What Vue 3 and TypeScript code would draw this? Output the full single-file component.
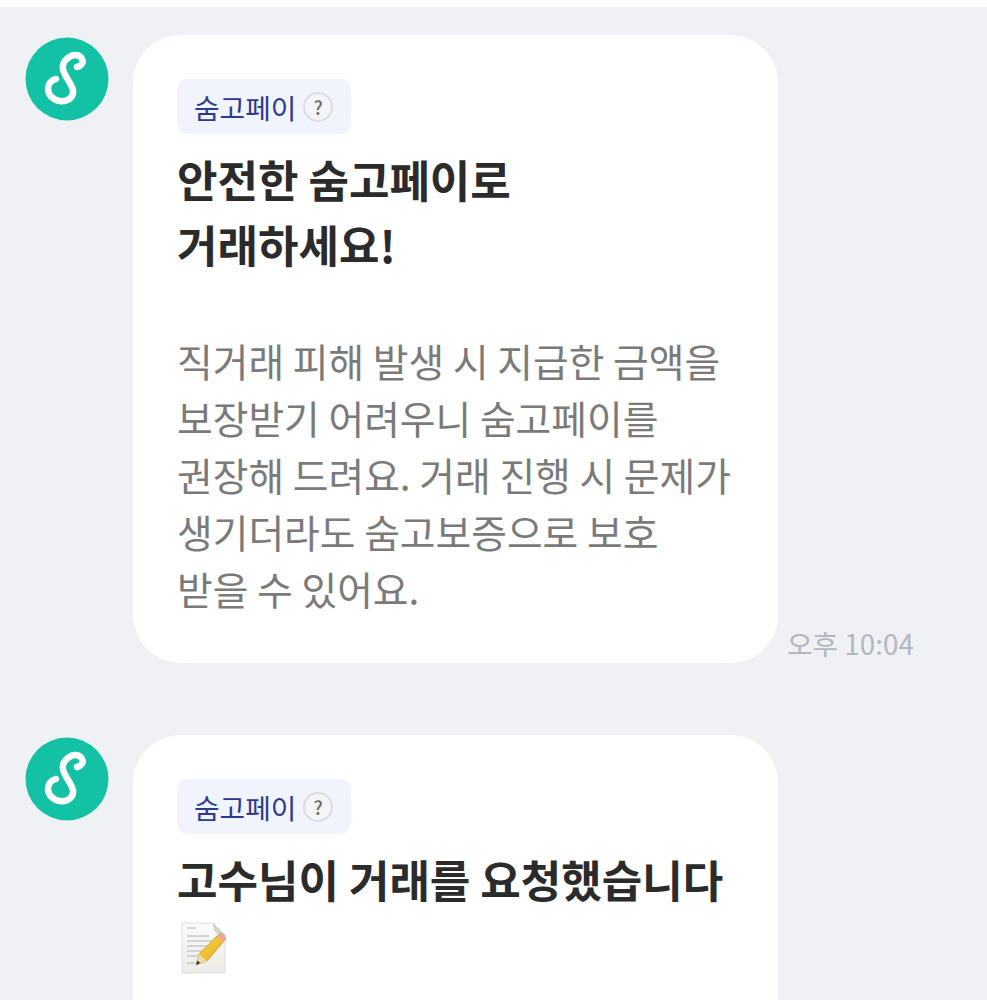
<script setup lang="ts">
const bodyLines = [
  '직거래 피해 발생 시 지급한 금액을',
  '보장받기 어려우니 숨고페이를',
  '권장해 드려요. 거래 진행 시 문제가',
  '생기더라도 숨고보증으로 보호',
  '받을 수 있어요.',
]
</script>

<template>
  <div class="chat">
    <div class="row">
      <svg class="avatar" viewBox="0 0 84 84">
        <circle cx="42" cy="42" r="41.5" fill="#13c2a5" />
        <path class="logo-s" d="M52 30C56 29 59 26 57 22C55 18 50 17 46 19C40 22 37 27 38 32C39 39 46 45 48 53C49 60 43 65 35 64C28 63 23 58 23 52C23 47 26 43 31 42" />
      </svg>
      <div class="bubble">
        <div class="tag">
          <span>숨고페이</span>
          <span class="help">?</span>
        </div>
        <h2 class="title">안전한 숨고페이로<br />거래하세요!</h2>
        <p class="desc">
          <span v-for="line in bodyLines" :key="line" class="line">{{ line }}</span>
        </p>
      </div>
      <span class="time">오후 10:04</span>
    </div>

    <div class="row">
      <svg class="avatar" viewBox="0 0 84 84">
        <circle cx="42" cy="42" r="41.5" fill="#13c2a5" />
        <path class="logo-s" d="M52 30C56 29 59 26 57 22C55 18 50 17 46 19C40 22 37 27 38 32C39 39 46 45 48 53C49 60 43 65 35 64C28 63 23 58 23 52C23 47 26 43 31 42" />
      </svg>
      <div class="bubble long">
        <div class="tag">
          <span>숨고페이</span>
          <span class="help">?</span>
        </div>
        <h2 class="title">고수님이 거래를 요청했습니다</h2>
        <svg class="memo" viewBox="0 0 46 52">
          <defs>
            <linearGradient id="pencil" x1="0" y1="0" x2="1" y2="1">
              <stop offset="0" stop-color="#fbdc4c" />
              <stop offset="1" stop-color="#e3a418" />
            </linearGradient>
            <linearGradient id="sheet" x1="0" y1="0" x2="0" y2="1">
              <stop offset="0" stop-color="#fbfbfa" />
              <stop offset="1" stop-color="#ecebe8" />
            </linearGradient>
          </defs>
          <path d="M1 1h31l12 12v38H1z" fill="url(#sheet)" stroke="#dedede" />
          <path d="M32 1c0 8 2 12 12 12z" fill="#d2d2d2" />
          <path d="M6 6h9M6 14h22M6 19h26M6 24h24M6 29h18M6 34h12M6 41h8" stroke="#b4b4b4" stroke-width="1" />
          <path d="M15 43l3-11 20-20c3-2 8 3 6 6L26 39z" fill="url(#pencil)" stroke="#b98a22" stroke-width=".6" />
          <path d="M15 43l3-11 8 7z" fill="#ecd9b0" />
          <path d="M15 43l1.3-4.5 3 2.5z" fill="#333" />
          <path d="M38 12c3-2 8 3 6 6l-2 2-6-6z" fill="#e9a79c" />
        </svg>
      </div>
    </div>
  </div>
</template>

<style scoped>
.chat {
  height: 993px;
  margin-top: 7px;
  padding: 28px 0 0 25px;
  box-sizing: border-box;
  overflow: hidden;
  background: #eff1f5;
  display: flex;
  flex-direction: column;
  gap: 72px;
  font-family: "Noto Sans CJK KR", "Noto Sans", sans-serif;
}
.row {
  display: flex;
  align-items: flex-end;
  flex-shrink: 0;
}
.avatar {
  width: 84px;
  height: 84px;
  align-self: flex-start;
  margin-top: 2px;
  margin-right: 24px;
  flex-shrink: 0;
}
.logo-s {
  fill: none;
  stroke: #fff;
  stroke-width: 6.5;
  stroke-linecap: round;
}
.bubble {
  width: 645px;
  box-sizing: border-box;
  padding: 44px 44px 46px;
  background: #fff;
  border-radius: 48px;
}
.bubble.long {
  min-height: 400px;
}
.tag {
  display: inline-flex;
  align-items: center;
  gap: 7px;
  height: 55px;
  padding: 0 18px 0 17px;
  border-radius: 11px;
  background: #f1f4fd;
  color: #2d3a8c;
  font-size: 27.8px;
}
.help {
  width: 30px;
  height: 30px;
  box-sizing: border-box;
  display: flex;
  align-items: center;
  justify-content: center;
  border: 2px solid #dcdde2;
  border-radius: 50%;
  background: #f5f5f7;
  color: #6a6c74;
  font-size: 19px;
  font-weight: 500;
}
.title {
  margin: 13px 0 0;
  font-size: 44px;
  line-height: 65px;
  font-weight: 700;
  color: #2b2b2b;
}
.desc {
  margin: 55px 0 0;
  font-size: 38.8px;
  line-height: 57px;
  color: #7a7a7a;
}
.line {
  display: block;
  white-space: nowrap;
}
.memo {
  display: block;
  width: 46px;
  height: 52px;
  margin: 10px 0 0 4px;
}
.time {
  margin: 0 0 3px 9px;
  font-size: 27.8px;
  line-height: 34px;
  color: #b3b7bf;
}
</style>

<style>
html, body {
  background: #fff;
  overflow: hidden;
}
</style>
